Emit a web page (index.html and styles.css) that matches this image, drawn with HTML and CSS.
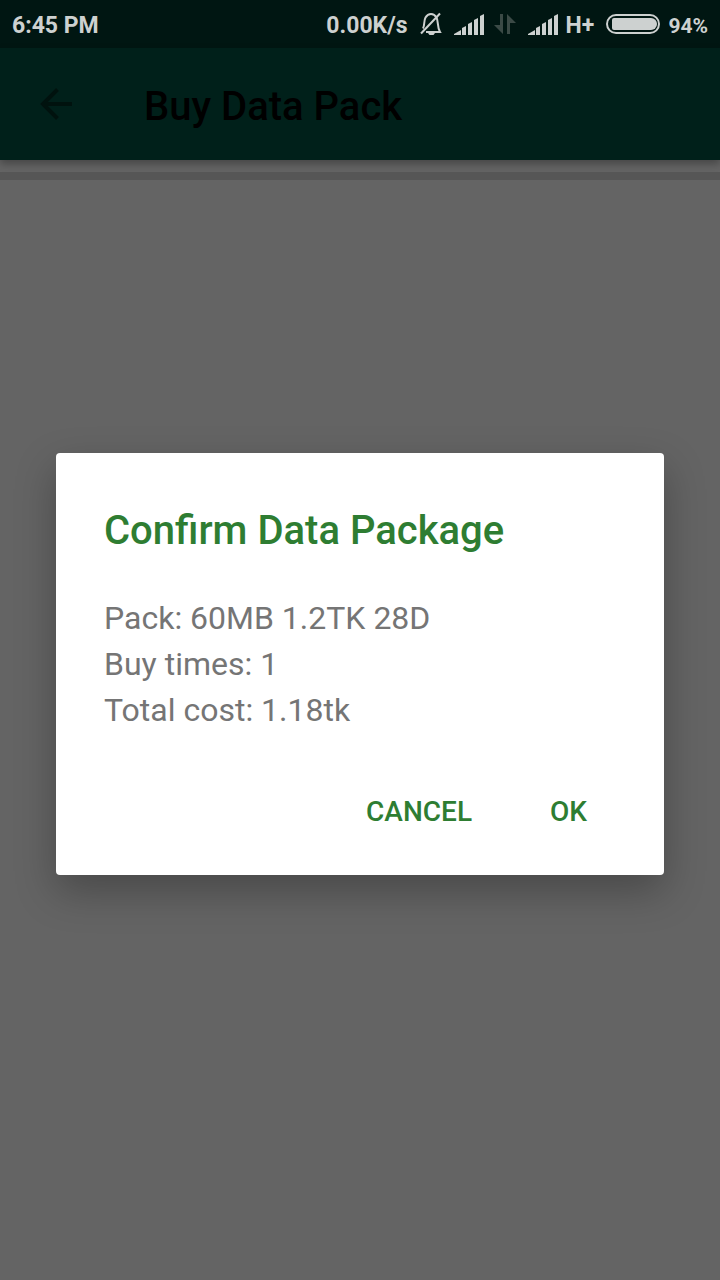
FILE: index.html
```html
<!DOCTYPE html>
<html lang="en">
<head>
<meta charset="utf-8">
<meta name="viewport" content="width=device-width, initial-scale=1">
<title>Buy Data Pack</title>
<link rel="stylesheet" href="styles.css">
</head>
<body>

<div class="status-bar">
	<span class="clock">6:45 PM</span>
	<span class="speed">0.00K/s</span>
	<svg class="bell" width="22" height="24" viewBox="0 0 22 24" fill="none" stroke="#cdd1d0" stroke-width="2">
		<path d="M3 16.500C5 13 3.500 9 5.500 5.500C7 3 9 2 11 2S15 3 16.500 5.500C18.500 9 17 15 20 20H6"/>
		<path d="M1 21.500L20 1.500"/>
		<path d="M8 21H15L13.500 23H9.500Z" fill="#cdd1d0" stroke="none"/>
	</svg>
	<svg class="signal" width="30" height="22" viewBox="0 0 30 22" fill="#cdd1d0">
		<path d="M0 22V21L7 17V22ZM8 22V15L12 13V22ZM14 22V11L18 9V22ZM20 22V7L24 5V22ZM26 22V3L30 1V22Z"/>
	</svg>
	<svg class="arrows" width="22" height="22" viewBox="0 0 22 22" fill="#3b4a46">
		<path d="M9 1V21L0 12H6V1ZM13 21V1L22 10H16V21Z"/>
	</svg>
	<svg class="signal" width="30" height="22" viewBox="0 0 30 22" fill="#cdd1d0">
		<path d="M0 22V21L7 17V22ZM8 22V15L12 13V22ZM14 22V11L18 9V22ZM20 22V7L24 5V22ZM26 22V3L30 1V22Z"/>
	</svg>
	<span class="network">H+</span>
	<svg class="battery" width="54" height="20" viewBox="0 0 54 20">
		<rect x="1" y="1" width="52" height="18" rx="9" fill="none" stroke="#cdd1d0" stroke-width="2"/>
		<path d="M8 4H45A6 6 0 0 1 45 16H8Q6 16 6 14V6Q6 4 8 4Z" fill="#cdd1d0"/>
	</svg>
	<span class="percent">94%</span>
</div>

<div class="screen">
	<header class="toolbar">
		<a class="back" href="#" aria-label="Back">
			<svg width="32" height="32" viewBox="0 0 32 32" fill="none" stroke="currentColor" stroke-width="4">
				<path d="M32 16H3M17.500 1.500L3 16L17.500 30.500"/>
			</svg>
		</a>
		<h1 class="toolbar-title">Buy Data Pack</h1>
	</header>
	<main class="content">
		<div class="strip"></div>
	</main>

	<div class="mask">
		<div class="dialog" role="dialog" aria-labelledby="dialogTitle">
			<h2 class="dialog-title" id="dialogTitle">Confirm Data Package</h2>
			<div class="dialog-content">
				<p>Pack: 60MB 1.2TK 28D</p>
				<p>Buy times: 1</p>
				<p>Total cost: 1.18tk</p>
			</div>
			<div class="dialog-buttons">
				<button class="dialog-button" type="button">CANCEL</button>
				<button class="dialog-button" type="button">OK</button>
			</div>
		</div>
	</div>
</div>

</body>
</html>
```
FILE: styles.css
```css
html,body {
	height: 100%;
}

body{
	margin: 0;
	display: flex;flex-direction: column;
	font-family: Roboto, "Liberation Sans", sans-serif;
}

h1,h2,p{margin: 0;}

.status-bar{
	display: flex;align-items: center;
	height: 48px;padding: 0 12px;
	box-sizing: border-box;
	background: #001612;color: #cdd1d0;
	font-size: 23px;font-weight: 700;line-height: 44px;
	white-space: nowrap;
}
.status-bar span{padding-top: 3px;}
.status-bar svg{flex: none;}
.clock{margin-right: auto;}
.bell{margin-left: 12px;}
.signal{margin-left: 12px;}
.arrows{margin-left: 10px;}
.network{margin-left: 8px;}
.battery{margin-left: 12px;}
.status-bar .percent{margin-left: 8px;font-size: 21px;}

.screen{
	flex: 1;
	display: flex;flex-direction: column;
	position: relative;
	background: #fafafa;
}

.toolbar{
	display: flex;align-items: center;
	height: 112px;padding: 0 40px;
	background: #005041;
	box-shadow: 0 4px 8px rgba(0,0,0,0.3);
}
.back{display: flex;color: #002d24;}
.toolbar-title{
	margin-left: 72px;padding-top: 6px;
	font-size: 40px;font-weight: 500;line-height: 48px;
	color: #000;
}

.content{padding-top: 12px;}
.strip{height: 8px;background: #d7d7d7;}

/* covers everything below the status bar */
.mask{
	position: absolute;
	top: 0;right: 0;bottom: 0;left: 0;
	display: flex;align-items: center;justify-content: center;
	padding: 0 56px;
	background: rgba(0,0,0,0.6);
}

.dialog{
	flex: 1;
	padding: 48px 48px 39px;
	box-sizing: border-box;
	border-radius: 4px;background: #fff;
	box-shadow: 0 16px 40px rgba(0,0,0,0.28);
}
.dialog-title{
	font-size: 40px;font-weight: 500;line-height: 60px;
	color: #2e7d32;
}
.dialog-content{
	padding-top: 34px;
	font-size: 32px;line-height: 46px;
	color: #757575;
}
.dialog-buttons{
	display: flex;justify-content: flex-end;gap: 46px;
	padding: 55px 13px 0 0;
}
.dialog-button{
	padding: 0 16px;
	border: none;background: none;
	font-family: inherit;font-size: 28px;font-weight: 500;line-height: 48px;
	color: #2e7d32;
	cursor: pointer;
}
```
